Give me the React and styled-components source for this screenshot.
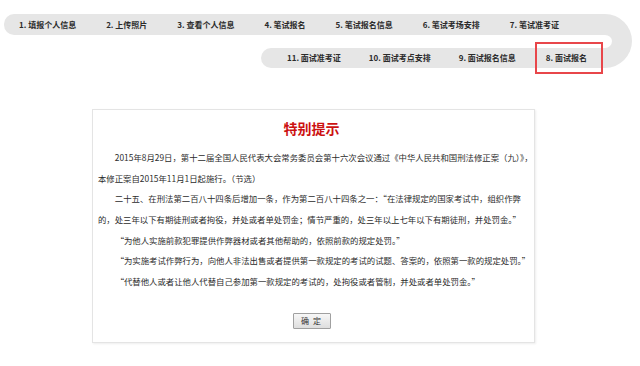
import React from 'react';
import styled, { createGlobalStyle } from 'styled-components';

const GlobalStyle = createGlobalStyle`
  body {
    margin: 0;
    background: #fff;
    font-family: "Noto Sans CJK SC", "Liberation Sans", sans-serif;
    color: #333;
  }
`;

const Page = styled.div`
  width: 640px;
  height: 366px;
  padding: 14px 0 0 4px;
  box-sizing: border-box;
  overflow: hidden;
`;

const Nav = styled.div`
  display: flex;
  width: 628px;
  height: 54px;
`;

const Rows = styled.div`
  flex: 1;
  display: flex;
  flex-direction: column;
`;

const Row = styled.div`
  display: flex;
  align-items: center;
  height: ${(p) => (p.$bottom ? 20 : 21)}px;
  margin-left: ${(p) => (p.$bottom ? 257 : 0)}px;
  margin-top: ${(p) => (p.$bottom ? 13 : 0)}px;
  padding-left: ${(p) => (p.$bottom ? 12 : 0)}px;
  background: #e6e6e6;
  border-radius: 10px 0 0 10px;
`;

const Bend = styled.div`
  width: 27px;
  height: 54px;
  box-sizing: border-box;
  border: solid #e6e6e6;
  border-width: 21px 20px 20px 0;
  border-radius: 0 27px 27px 0;
`;

const Step = styled.div`
  padding: 0 ${(p) => p.$pad}px;
  font-size: 8px;
  font-weight: 700;
  line-height: 12px;
  color: #2b2b2b;
  white-space: nowrap;
`;

const ActiveStep = styled(Step)`
  display: flex;
  align-items: center;
  height: 32px;
  box-sizing: border-box;
  margin-left: 5px;
  padding: 0 14px 0 9px;
  border: 2px solid #e8464a;
`;

const CardWrap = styled.div`
  padding: 41px 0 0 88px;
`;

const Card = styled.div`
  width: 443px;
  height: 234px;
  box-sizing: border-box;
  padding: 7px 9px 0 5px;
  border: 1px solid #e4e4e4;
  box-shadow: 1px 1px 2px rgba(0, 0, 0, 0.07);
  display: flex;
  flex-direction: column;
`;

const Title = styled.h2`
  margin: 0 0 8px;
  text-align: center;
  font-size: 14px;
  line-height: 22px;
  font-weight: 700;
  color: #cc1111;
`;

const Body = styled.div`
  font-size: 8.4px;
  line-height: 20.67px;
  color: #2b2b2b;
  white-space: nowrap;
`;

const Para = styled.p`
  margin: 0;
  text-indent: ${(p) => (p.$quote ? 2.1 : 2)}em;
`;

const Actions = styled.div`
  display: flex;
  justify-content: center;
  margin-top: auto;
  padding-bottom: 13px;
`;

const Button = styled.button`
  width: 38px;
  height: 16px;
  padding: 0;
  border: 1px solid #a0a0a0;
  border-radius: 1px;
  background: linear-gradient(#f7f7f7, #dedede);
  font-family: "Noto Sans CJK SC", sans-serif;
  font-size: 8px;
  line-height: 14px;
  color: #333;
  letter-spacing: 1px;
`;

const topSteps = ['1. 填报个人信息', '2. 上传照片', '3. 查看个人信息', '4. 笔试报名', '5. 笔试报名信息', '6. 笔试考场安排', '7. 笔试准考证'];
const bottomSteps = ['11. 面试准考证', '10. 面试考点安排', '9. 面试报名信息'];

export default function App() {
  return (
    <Page>
      <GlobalStyle />
      <Nav>
        <Rows>
          <Row>
            {topSteps.map((s) => (
              <Step key={s} $pad={15}>{s}</Step>
            ))}
          </Row>
          <Row $bottom>
            {bottomSteps.map((s) => (
              <Step key={s} $pad={14}>{s}</Step>
            ))}
            <ActiveStep>8. 面试报名</ActiveStep>
          </Row>
        </Rows>
        <Bend />
      </Nav>
      <CardWrap>
        <Card>
          <Title>特别提示</Title>
          <Body>
            <Para>
              2015年8月29日，第十二届全国人民代表大会常务委员会第十六次会议通过《中华人民共和国刑法修正案（九）》，
              <br />
              本修正案自2015年11月1日起施行。（节选）
            </Para>
            <Para>
              二十五、在刑法第二百八十四条后增加一条，作为第二百八十四条之一：“在法律规定的国家考试中，组织作弊
              <br />
              的，处三年以下有期徒刑或者拘役，并处或者单处罚金；情节严重的，处三年以上七年以下有期徒刑，并处罚金。”
            </Para>
            <Para $quote>“为他人实施前款犯罪提供作弊器材或者其他帮助的，依照前款的规定处罚。”</Para>
            <Para $quote>“为实施考试作弊行为，向他人非法出售或者提供第一款规定的考试的试题、答案的，依照第一款的规定处罚。”</Para>
            <Para $quote>“代替他人或者让他人代替自己参加第一款规定的考试的，处拘役或者管制，并处或者单处罚金。”</Para>
          </Body>
          <Actions>
            <Button>确 定</Button>
          </Actions>
        </Card>
      </CardWrap>
    </Page>
  );
}
